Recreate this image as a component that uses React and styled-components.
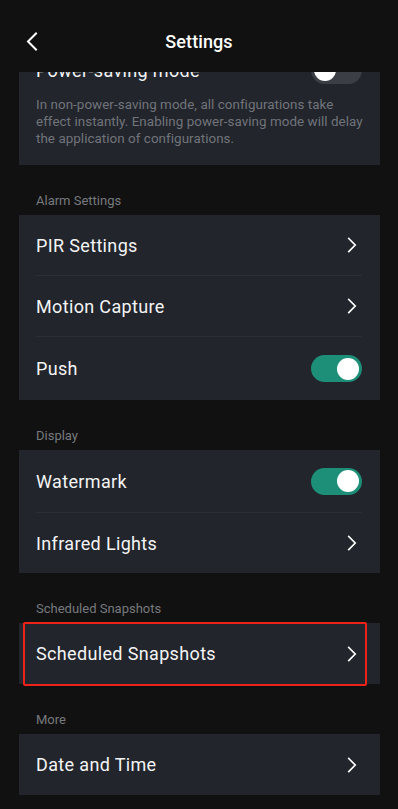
import React from "react";
import styled, { createGlobalStyle } from "styled-components";

const GlobalStyle = createGlobalStyle`
  html, body { margin: 0; padding: 0; background: #111111; }
  body { font-family: Roboto, "Noto Sans", "Liberation Sans", sans-serif; -webkit-font-smoothing: antialiased; }
  * { box-sizing: border-box; }
`;

const Screen = styled.div`
  width: 398px;
  height: 809px;
  background: #111111;
  display: flex;
  flex-direction: column;
  overflow: hidden;
`;

const Header = styled.header`
  height: 72px;
  flex: none;
  display: grid;
  grid-template-columns: 60px 1fr 60px;
  align-items: center;
  padding-top: 10px;
  background: #111111;
  position: relative;
  z-index: 2;
`;

const BackButton = styled.button`
  background: none;
  border: none;
  padding: 0 0 0 25px;
  height: 24px;
  display: flex;
  align-items: center;
  cursor: pointer;
`;

const Title = styled.h1`
  margin: 0;
  text-align: center;
  color: #ffffff;
  font-size: 18px;
  font-weight: 500;
  letter-spacing: 0.1px;
`;

const Content = styled.main`
  flex: 1;
  overflow: hidden;
  padding: 0 18px 0 19px;
  display: flex;
  flex-direction: column;
`;

const Card = styled.section`
  background: #22252c;
  display: flex;
  flex-direction: column;
  flex: none;
  position: relative;
  margin-top: ${(p) => p.$offset || 0}px;
`;

const Row = styled.div`
  height: ${(p) => p.$h || 60}px;
  display: flex;
  align-items: center;
  justify-content: space-between;
  padding: 0 18px 0 17px;
`;

const RowLabel = styled.span`
  color: #f4f4f5;
  font-size: 18px;
  font-weight: 400;
  letter-spacing: 0.35px;
`;

const Divider = styled.div`
  height: 1px;
  margin: 0 18px 0 17px;
  background: #2c2f36;
`;

const Description = styled.p`
  margin: 0;
  padding: 0 10px 18px 17px;
  color: #71747a;
  font-size: 13.4px;
  line-height: 17px;
  letter-spacing: 0.05px;
`;

const SectionLabel = styled.div`
  height: 50px;
  flex: none;
  padding: 28px 0 0 17px;
  color: #77797e;
  font-size: 13px;
  line-height: 16px;
`;

const Track = styled.div`
  width: 51px;
  height: 27px;
  border-radius: 14px;
  background: ${(p) => (p.$on ? "#1d8f78" : "#3b3e44")};
  display: flex;
  align-items: center;
  justify-content: ${(p) => (p.$on ? "flex-end" : "flex-start")};
  padding: 0 3px;
`;

const Knob = styled.div`
  width: 22px;
  height: 22px;
  border-radius: 50%;
  background: #ffffff;
`;

const ChevronIcon = styled.svg`
  margin-right: 5px;
  flex: none;
`;

const Highlight = styled.div`
  position: absolute;
  left: 4px;
  right: 13px;
  top: -1px;
  bottom: -2px;
  border: 2px solid #ee2219;
  border-radius: 2px;
  pointer-events: none;
`;

const Toggle = ({ on }) => (
  <Track $on={on}>
    <Knob />
  </Track>
);

const Chevron = () => (
  <ChevronIcon width="10" height="16" viewBox="0 0 10 16">
    <path d="M1.8 1.5 L8.2 8 L1.8 14.5" fill="none" stroke="#ffffff" strokeWidth="1.7" strokeLinecap="square" />
  </ChevronIcon>
);

const BackIcon = () => (
  <svg width="13" height="19" viewBox="0 0 13 19">
    <path d="M11 1.5 L3 9.5 L11 17.5" fill="none" stroke="#ffffff" strokeWidth="2" strokeLinecap="square" />
  </svg>
);

export default function App() {
  return (
    <>
      <GlobalStyle />
      <Screen>
        <Header>
          <BackButton aria-label="Back">
            <BackIcon />
          </BackButton>
          <Title>Settings</Title>
          <span />
        </Header>
        <Content>
          <Card $offset={-28}>
            <Row $h={52}>
              <RowLabel>Power-saving mode</RowLabel>
              <Toggle on={false} />
            </Row>
            <Description>
              In non-power-saving mode, all configurations take effect instantly. Enabling power-saving mode will delay
              the application of configurations.
            </Description>
          </Card>

          <SectionLabel>Alarm Settings</SectionLabel>
          <Card>
            <Row>
              <RowLabel>PIR Settings</RowLabel>
              <Chevron />
            </Row>
            <Divider />
            <Row>
              <RowLabel>Motion Capture</RowLabel>
              <Chevron />
            </Row>
            <Divider />
            <Row $h={63}>
              <RowLabel>Push</RowLabel>
              <Toggle on />
            </Row>
          </Card>

          <SectionLabel>Display</SectionLabel>
          <Card>
            <Row $h={62}>
              <RowLabel>Watermark</RowLabel>
              <Toggle on />
            </Row>
            <Divider />
            <Row $h={60}>
              <RowLabel>Infrared Lights</RowLabel>
              <Chevron />
            </Row>
          </Card>

          <SectionLabel>Scheduled Snapshots</SectionLabel>
          <Card>
            <Row $h={61}>
              <RowLabel>Scheduled Snapshots</RowLabel>
              <Chevron />
            </Row>
            <Highlight />
          </Card>

          <SectionLabel>More</SectionLabel>
          <Card>
            <Row $h={61}>
              <RowLabel>Date and Time</RowLabel>
              <Chevron />
            </Row>
          </Card>
        </Content>
      </Screen>
    </>
  );
}
